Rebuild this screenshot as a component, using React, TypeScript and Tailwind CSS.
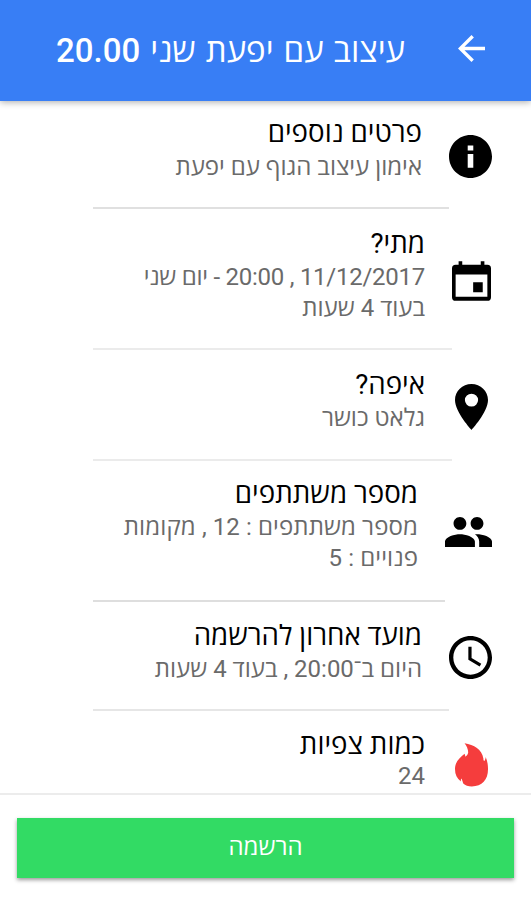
import React from 'react';
import clsx from 'clsx';

const InfoIcon = () => (
    <svg viewBox="2 2 20 20" className="h-[43px] w-[43px]" fill="currentColor">
        <path d="M12 2C6.48 2 2 6.48 2 12s4.48 10 10 10 10-4.48 10-10S17.52 2 12 2zm1.3 15.2h-2.6v-6.4h2.6v6.4zm0-8h-2.6V6.9h2.6v2.3z" />
    </svg>
);

const CalendarIcon = () => (
    <svg viewBox="0 0 118 120" className="mr-px h-10 w-[39px]" fill="currentColor">
        <path
            fillRule="evenodd"
            d="M20 0h11v11h56V0h11v11h9a11 11 0 0 1 11 11v87a11 11 0 0 1-11 11H11a11 11 0 0 1-11-11V22a11 11 0 0 1 11-11h9zM11 40v68h96V40zM64 64h29v30H64z"
        />
    </svg>
);

const PinIcon = () => (
    <svg viewBox="5 2 14 20" preserveAspectRatio="none" className="mr-1 ml-[3px] h-[46px] w-[33px]" fill="currentColor">
        <path
            fillRule="evenodd"
            d="M12 2C8.13 2 5 5.13 5 9c0 5.25 7 13 7 13s7-7.75 7-13c0-3.87-3.13-7-7-7zm0 9.8a2.8 2.8 0 1 1 0-5.6 2.8 2.8 0 0 1 0 5.6z"
        />
    </svg>
);

const PeopleIcon = () => (
    <svg viewBox="1 5 22 14" className="mb-[2px] h-[30px] w-[47px]" fill="currentColor">
        <path d="M16 11c1.66 0 2.99-1.34 2.99-3S17.66 5 16 5c-1.66 0-3 1.34-3 3s1.34 3 3 3zm-8 0c1.66 0 2.99-1.34 2.99-3S9.66 5 8 5C6.34 5 5 6.34 5 8s1.34 3 3 3zm0 2c-2.33 0-7 1.17-7 3.5V19h14v-2.5c0-2.33-4.67-3.5-7-3.5zm8 0c-.29 0-.62.02-.97.05 1.16.84 1.97 1.97 1.97 3.45V19h6v-2.5c0-2.33-4.67-3.5-7-3.5z" />
    </svg>
);

const ClockIcon = () => (
    <svg viewBox="2 2 20 20" className="h-[43px] w-[43px]" fill="currentColor">
        <path d="M11.99 2C6.47 2 2 6.48 2 12s4.47 10 9.99 10C17.52 22 22 17.52 22 12S17.52 2 11.99 2zM12 20c-4.42 0-8-3.58-8-8s3.58-8 8-8 8 3.58 8 8-3.58 8-8 8zm.5-13H11v6l5.25 3.15.75-1.23-4.5-2.67z" />
    </svg>
);

const FlameIcon = () => (
    <svg viewBox="0 0 100 132" className="mr-1 ml-[3px] h-11 w-[33px]" fill="#f53d3d">
        <path d="M29 0C57 5 82 18 86 46c0 4 1 7 3 8 2-3 4-7 4-12 5 12 7 22 7 37 0 32-18 52-49 52-11 0-20-3-26-9l-5-15c-2 2-3 5-2 9C6 107 0 95 0 78c0-22 14-33 29-46l3 9c4-4 7-7 8-13C40 17 35 8 29 0z" />
    </svg>
);

const items = [
    {
        icon: <InfoIcon />,
        title: 'פרטים נוספים',
        lines: ['אימון עיצוב הגוף עם יפעת'],
        row: 'h-[108px]',
        text: 'pt-[13px] border-[#e0e0e0]',
        body: 'pt-px',
    },
    {
        icon: <CalendarIcon />,
        title: 'מתי?',
        lines: ['11/12/2017 , 20:00 - יום שני', 'בעוד 4 שעות'],
        row: 'h-[141px]',
        text: 'pt-4 border-[#ebebeb]',
        body: 'first-of-type:tracking-[-0.26px]',
    },
    {
        icon: <PinIcon />,
        title: 'איפה?',
        lines: ['גלאט כושר'],
        row: 'h-[111px]',
        text: 'pt-4 border-[#ebebeb]',
        body: '',
    },
    {
        icon: <PeopleIcon />,
        title: 'מספר משתתפים',
        lines: ['מספר משתתפים : 12 , מקומות', 'פנויים : 5'],
        row: 'h-[141px]',
        text: 'pt-[14px] border-[#dedede]',
        body: 'tracking-[0.1px]',
    },
    {
        icon: <ClockIcon />,
        title: 'מועד אחרון להרשמה',
        lines: ['היום ב־20:00 , בעוד 4 שעות'],
        row: 'h-[109px]',
        text: 'pt-[15px] border-[#e6e6e6]',
        body: '',
    },
    {
        icon: <FlameIcon />,
        title: 'כמות צפיות',
        lines: ['24'],
        row: 'h-[105px]',
        text: 'pt-[15px]',
        body: '-mt-[2px]',
    },
];

const App: React.FC = () => {
    return (
        <div
            dir="rtl"
            className="flex h-[900px] w-[531px] flex-col overflow-hidden bg-white font-[Roboto,'Open_Sans',sans-serif]"
        >
            <header className="relative z-10 flex h-[101px] shrink-0 items-center bg-[#387ef5] pr-[46px] text-white shadow-[0_1px_7px_rgba(0,0,0,0.35)]">
                <svg viewBox="4 4 16 16" className="mb-1 h-[27px] w-[27px]" fill="currentColor">
                    <path d="M20 11H7.83l5.59-5.59L12 4l-8 8 8 8 1.41-1.41L7.83 13H20v-2z" />
                </svg>
                <h1 className="mr-[53px] whitespace-nowrap text-[33px] font-medium leading-none [word-spacing:1.8px]">
                    עיצוב עם יפעת שני 20.00
                </h1>
            </header>

            <main className="min-h-0 flex-1 overflow-hidden">
                {items.map((item, i) => (
                    <div key={item.title} className={clsx('flex pl-[93px] pr-[39px]', item.row)}>
                        <div className="flex items-center pt-[2px]">{item.icon}</div>
                        <div
                            className={clsx(
                                'flex-1 whitespace-nowrap pr-[27px]',
                                i < items.length - 1 && 'border-b-2',
                                item.text,
                            )}
                        >
                            <h2 className="text-[27.7px] leading-[37px] text-black">{item.title}</h2>
                            {item.lines.map((line) => (
                                <p key={line} className={clsx('text-[24px] leading-[31px] text-[#6a6a6a]', item.body)}>
                                    {line}
                                </p>
                            ))}
                        </div>
                    </div>
                ))}
            </main>

            <footer className="h-[107px] shrink-0 border-t-2 border-[#ececec] bg-white px-[17px] pt-[23px]">
                <button className="flex h-[60px] w-full items-center justify-center bg-[#32db64] pb-[3px] text-[24px] text-white shadow-[0_2px_4px_rgba(0,0,0,0.4)]">
                    הרשמה
                </button>
            </footer>
        </div>
    );
};

export default App;
